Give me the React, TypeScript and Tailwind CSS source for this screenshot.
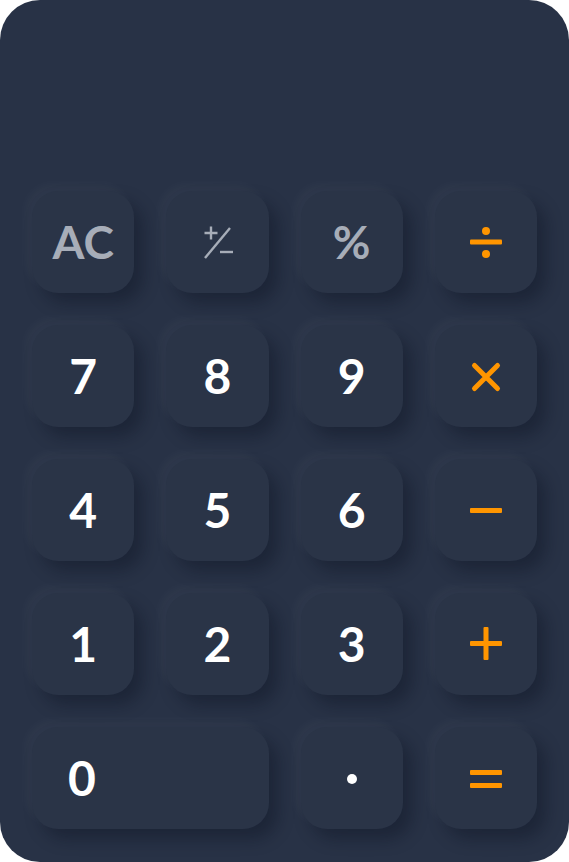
import React from 'react';

const ORANGE = '#ff9500';
const GRAY = '#a7adb8';

type Key = {
  id: string;
  label?: string;
  icon?: React.ReactNode;
  tone?: 'white' | 'gray';
  wide?: boolean;
};

function Icon({ children }: { children: React.ReactNode }) {
  return (
    <svg width="102" height="102" viewBox="-51 -51 102 102" fill="none" strokeLinecap="round">
      {children}
    </svg>
  );
}

const keys: Key[] = [
  { id: 'ac', label: 'AC', tone: 'gray' },
  {
    id: 'sign',
    icon: (
      <Icon>
        <g stroke={GRAY} strokeWidth="2.4" strokeLinecap="butt">
          <path d="M-12.5 -9H0.5M-6 -15.5V-2.5" />
          <path d="M13 -14L-12 16" />
          <path d="M3 10H16" />
        </g>
      </Icon>
    ),
  },
  { id: 'pct', label: '%', tone: 'gray' },
  {
    id: 'div',
    icon: (
      <Icon>
        <rect x="-16" y="-2.5" width="32" height="5" rx="1" fill={ORANGE} />
        <circle cx="0" cy="-11" r="4" fill={ORANGE} />
        <circle cx="0" cy="12" r="4" fill={ORANGE} />
      </Icon>
    ),
  },
  { id: '7', label: '7' },
  { id: '8', label: '8' },
  { id: '9', label: '9' },
  {
    id: 'mul',
    icon: (
      <Icon>
        <path d="M-11.5 -11.5L11.5 11.5M11.5 -11.5L-11.5 11.5" stroke={ORANGE} strokeWidth="5" transform="translate(0 1)" />
      </Icon>
    ),
  },
  { id: '4', label: '4' },
  { id: '5', label: '5' },
  { id: '6', label: '6' },
  {
    id: 'sub',
    icon: (
      <Icon>
        <rect x="-16" y="-2" width="32" height="5" rx="1" fill={ORANGE} />
      </Icon>
    ),
  },
  { id: '1', label: '1' },
  { id: '2', label: '2' },
  { id: '3', label: '3' },
  {
    id: 'add',
    icon: (
      <Icon>
        <rect x="-16" y="-3" width="32" height="5" rx="1" fill={ORANGE} />
        <rect x="-2.5" y="-17" width="5" height="33" rx="1" fill={ORANGE} />
      </Icon>
    ),
  },
  { id: '0', label: '0', wide: true },
  {
    id: 'dot',
    icon: (
      <Icon>
        <circle cx="0" cy="1" r="5" fill="#ffffff" />
      </Icon>
    ),
  },
  {
    id: 'eq',
    icon: (
      <Icon>
        <rect x="-16" y="-8" width="32" height="5" rx="1" fill={ORANGE} />
        <rect x="-16" y="5" width="32" height="5" rx="1" fill={ORANGE} />
      </Icon>
    ),
  },
];

export default function App() {
  return (
    <div className="w-[569px] h-[862px] bg-white">
      <div
        className="h-full rounded-[40px] bg-[#283246] px-8 pb-[33px] flex flex-col justify-end"
        style={{ fontFamily: 'Lato, "Open Sans", sans-serif' }}
      >
        {/* Keypad */}
        <div className="grid grid-cols-4 auto-rows-[102px] gap-8">
          {keys.map((k) => (
            <button
              key={k.id}
              className={`rounded-[26px] bg-[#2a3447] flex items-center shadow-[-6px_-6px_12px_rgba(255,255,255,0.035),9px_10px_16px_rgba(10,15,30,0.35)] ${
                k.wide ? 'col-span-2 justify-start pl-[36px]' : 'justify-center'
              }`}
            >
              {k.icon ? (
                k.icon
              ) : (
                <span
                  className={`font-bold leading-none ${
                    k.tone === 'gray' ? 'text-[#a7adb8] text-[46px]' : 'text-white text-[48px]'
                  } ${k.id === 'pct' ? 'text-[42px]' : ''}`}
                >
                  {k.label}
                </span>
              )}
            </button>
          ))}
        </div>
      </div>
    </div>
  );
}
